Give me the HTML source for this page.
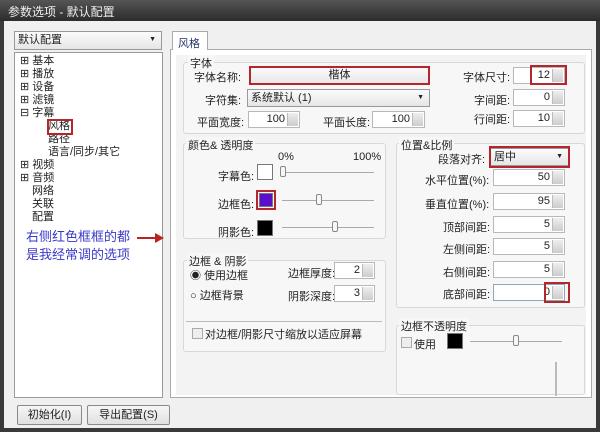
<!DOCTYPE html>
<html><head><meta charset="utf-8"><style>
*{margin:0;padding:0;box-sizing:border-box}
body{width:600px;height:432px;overflow:hidden;background:#3a3a3a;font-family:"Liberation Sans","Noto Sans CJK SC",sans-serif;font-size:11px;color:#222;position:relative}
.a{position:absolute}
.win{left:4px;top:21px;width:592px;height:407px;background:#f0f0f0}
.box{position:absolute;background:#fff;border:1px solid #9a9a9a}
.grp{position:absolute;border:1px solid #d8d8d8;border-radius:3px;background:#f7f7f7}
.gl{position:absolute;background:#f7f7f7;padding:0 2px;font-size:11px}
.lbl{position:absolute;font-size:11px;text-align:right;white-space:nowrap}
.inp{position:absolute;background:#fff;border:1px solid #b8b8b8;height:17px;text-align:right;padding-right:14px;font-size:11px;line-height:15px}
.inp:after{content:"";position:absolute;right:1px;top:1px;width:10px;height:13px;background:linear-gradient(#eee,#ccc);border-left:1px solid #bbb}
.red{position:absolute;border:2px solid #b3262c}
.sel{position:absolute;background:linear-gradient(#fbfbfb,#e6e6e6);border:1px solid #999;height:18px;font-size:11px;line-height:16px;padding-left:3px}
.sel:after{content:"▼";position:absolute;right:5px;top:0;font-size:7px}
.sw{position:absolute;width:16px;height:16px;border:1px solid #777}
.sl{position:absolute;height:1px;background:#aaa}
.th{position:absolute;width:6px;height:11px;border:1px solid #888;background:#f7f7f7;border-radius:2px}
.btn{position:absolute;border:1px solid #8a8a8a;background:linear-gradient(#f6f6f6,#e0e0e0);border-radius:2px;text-align:center;font-size:11px;line-height:18px}
.tree div{height:13px;line-height:13px;font-size:11px}
</style></head><body>
<div class="a" style="left:0;top:0;width:600px;height:21px;background:linear-gradient(#555,#2c2c2c)"></div>
<div class="a" style="left:8px;top:3px;color:#eee;font-size:12px">参数选项 - 默认配置</div>
<div class="a win"></div>
<div class="sel" style="left:14px;top:31px;width:148px;height:19px">默认配置</div>
<div class="box" style="left:14px;top:52px;width:149px;height:346px"></div>
<div class="a tree" style="left:20px;top:55px">
<div>⊞ 基本</div><div>⊞ 播放</div><div>⊞ 设备</div><div>⊞ 滤镜</div><div>⊟ 字幕</div>
<div style="padding-left:28px">风格</div><div style="padding-left:28px">路径</div><div style="padding-left:28px">语言/同步/其它</div>
<div>⊞ 视频</div><div>⊞ 音频</div><div style="padding-left:12px">网络</div><div style="padding-left:12px">关联</div><div style="padding-left:12px">配置</div></div>
<div class="red" style="left:47px;top:119px;width:26px;height:16px"></div>
<div class="a" style="left:26px;top:228px;color:#3939c8;font-size:13px;line-height:18px">右侧红色框框的都<br>是我经常调的选项</div>
<div class="a" style="left:137px;top:237px;width:20px;height:2px;background:#b22"></div>
<div class="a" style="left:155px;top:233px;border-left:9px solid #b22;border-top:5px solid transparent;border-bottom:5px solid transparent"></div>
<div class="box" style="left:170px;top:49px;width:422px;height:349px;background:#fff;border-color:#aaa"></div>
<div class="a" style="left:172px;top:31px;width:36px;height:19px;background:#fff;border:1px solid #aaa;border-bottom:none;padding:3px 5px;color:#236">风格</div>
<div class="a" style="left:176px;top:55px;width:410px;height:340px;background:#f3f3f3"></div>
<div class="grp" style="left:183px;top:62px;width:402px;height:72px"></div>
<div class="gl" style="left:188px;top:55px">字体</div>
<div class="lbl" style="left:194px;top:69px">字体名称:</div>
<div class="a" style="left:251px;top:68px;width:177px;height:15px;background:linear-gradient(#fafafa,#e8e8e8);text-align:center;line-height:15px">楷体</div>
<div class="red" style="left:249px;top:66px;width:181px;height:19px"></div>
<div class="lbl" style="left:463px;top:69px">字体尺寸:</div>
<div class="inp" style="left:513px;top:67px;width:52px">12</div>
<div class="red" style="left:530px;top:65px;width:37px;height:20px"></div>
<div class="lbl" style="left:205px;top:92px">字符集:</div>
<div class="sel" style="left:247px;top:89px;width:183px">系统默认 (1)</div>
<div class="lbl" style="left:474px;top:92px">字间距:</div>
<div class="inp" style="left:513px;top:89px;width:52px">0</div>
<div class="lbl" style="left:197px;top:114px">平面宽度:</div>
<div class="inp" style="left:248px;top:111px;width:52px">100</div>
<div class="lbl" style="left:323px;top:114px">平面长度:</div>
<div class="inp" style="left:372px;top:111px;width:53px">100</div>
<div class="lbl" style="left:474px;top:111px">行间距:</div>
<div class="inp" style="left:513px;top:110px;width:52px">10</div>
<div class="grp" style="left:183px;top:143px;width:203px;height:96px"></div>
<div class="gl" style="left:186px;top:137px">颜色& 透明度</div>
<div class="lbl" style="left:278px;top:151px">0%</div>
<div class="lbl" style="left:353px;top:151px">100%</div>
<div class="lbl" style="left:218px;top:168px">字幕色:</div>
<div class="sw" style="left:257px;top:164px;background:#fff"></div>
<div class="sl" style="left:282px;top:172px;width:92px"></div><div class="th" style="left:280px;top:166px"></div>
<div class="lbl" style="left:218px;top:196px">边框色:</div>
<div class="sw" style="left:259px;top:193px;width:14px;height:14px;background:#5a0fc8"></div>
<div class="red" style="left:256px;top:190px;width:20px;height:20px"></div>
<div class="sl" style="left:282px;top:200px;width:92px"></div><div class="th" style="left:316px;top:194px"></div>
<div class="lbl" style="left:218px;top:224px">阴影色:</div>
<div class="sw" style="left:257px;top:220px;background:#000"></div>
<div class="sl" style="left:282px;top:227px;width:92px"></div><div class="th" style="left:332px;top:221px"></div>
<div class="grp" style="left:183px;top:260px;width:203px;height:92px"></div>
<div class="gl" style="left:187px;top:253px">边框 &amp; 阴影</div>
<div class="a" style="left:190px;top:267px">◉ 使用边框</div>
<div class="a" style="left:190px;top:287px">○ 边框背景</div>
<div class="lbl" style="left:288px;top:265px">边框厚度:</div>
<div class="inp" style="left:334px;top:262px;width:41px">2</div>
<div class="lbl" style="left:288px;top:288px">阴影深度:</div>
<div class="inp" style="left:334px;top:285px;width:41px">3</div>
<div class="a" style="left:186px;top:321px;width:196px;height:1px;background:#bbb"></div>
<div class="a" style="left:192px;top:328px;width:11px;height:11px;border:1px solid #aaa;background:#eee"></div>
<div class="a" style="left:205px;top:326px">对边框/阴影尺寸缩放以适应屏幕</div>
<div class="grp" style="left:396px;top:143px;width:189px;height:165px"></div>
<div class="gl" style="left:399px;top:137px">位置&amp;比例</div>
<div class="lbl" style="left:438px;top:151px">段落对齐:</div>
<div class="sel" style="left:490px;top:148px;width:79px">居中</div>
<div class="red" style="left:489px;top:146px;width:81px;height:22px"></div>
<div class="lbl" style="left:425px;top:172px">水平位置(%):</div><div class="inp" style="left:493px;top:169px;width:72px">50</div>
<div class="lbl" style="left:425px;top:196px">垂直位置(%):</div><div class="inp" style="left:493px;top:193px;width:72px">95</div>
<div class="lbl" style="left:443px;top:219px">顶部间距:</div><div class="inp" style="left:493px;top:216px;width:72px">5</div>
<div class="lbl" style="left:443px;top:241px">左侧间距:</div><div class="inp" style="left:493px;top:238px;width:72px">5</div>
<div class="lbl" style="left:443px;top:264px">右侧间距:</div><div class="inp" style="left:493px;top:261px;width:72px">5</div>
<div class="lbl" style="left:443px;top:286px">底部间距:</div><div class="inp" style="left:493px;top:284px;width:72px;border-color:#8ab">0</div>
<div class="red" style="left:544px;top:282px;width:26px;height:21px"></div>
<div class="grp" style="left:396px;top:325px;width:189px;height:70px"></div>
<div class="gl" style="left:399px;top:318px">边框不透明度</div>
<div class="a" style="left:401px;top:337px;width:11px;height:11px;border:1px solid #aaa;background:#eee"></div>
<div class="a" style="left:414px;top:336px">使用</div>
<div class="sw" style="left:447px;top:333px;background:#000"></div>
<div class="sl" style="left:470px;top:341px;width:92px"></div><div class="th" style="left:513px;top:335px"></div>
<div class="a" style="left:555px;top:362px;width:2px;height:34px;background:#bbb"></div>
<div class="btn" style="left:17px;top:405px;width:65px;height:20px">初始化(I)</div>
<div class="btn" style="left:87px;top:405px;width:83px;height:20px">导出配置(S)</div>
</body></html>
